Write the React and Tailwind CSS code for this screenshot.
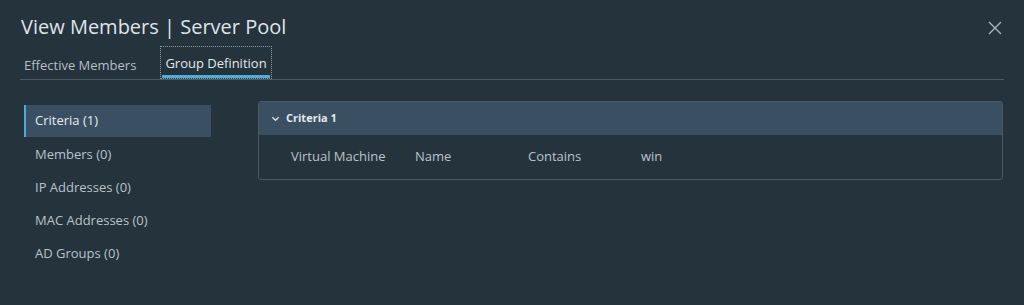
export default function App() {
  const items = ["Criteria (1)", "Members (0)", "IP Addresses (0)", "MAC Addresses (0)", "AD Groups (0)"];
  return (
    <div className="w-[1024px] h-[305px] bg-[#25333d] text-[#c9d3d9] overflow-hidden" style={{ fontFamily: "'Open Sans', 'Noto Sans', sans-serif" }}>
      <div className="flex items-start justify-between pl-[21px] pr-[22px] pt-[13px]">
        <h1 className="text-[20px] leading-[28px] text-[#dfe5e8] font-normal">View Members | Server Pool</h1>
        <svg width="14" height="14" viewBox="0 0 14 14" className="mt-[8px]" fill="none" stroke="#a9b6be" strokeWidth="1.4">
          <path d="M1 1L13 13M13 1L1 13" />
        </svg>
      </div>
      <div className="mx-[20px] mt-[5px] flex border-b border-[#4a5a64] h-[34px]">
        <div className="px-[4px] pt-[6px] flex items-center text-[13px] text-[#b4bfc5] h-full">Effective Members</div>
        <div className="ml-[20px] relative flex flex-col h-full border border-dotted border-[#8c9aa3]">
          <div className="flex-1 flex items-center pt-[6px] px-[4px] text-[13px] text-[#e2e8eb]">Group Definition</div>
          <div className="mx-[1px] h-[3px] bg-[#49afd9]" />
        </div>
      </div>
      <div className="flex mt-[26px] pl-[24px] pr-[21px]">
        <div className="w-[187px] flex flex-col -mt-[1px]">
          {items.map((t, i) => (
            <div
              key={t}
              className={
                i === 0
                  ? "h-[32px] mb-[1px] flex items-center pl-[9px] border-l-2 border-[#49afd9] bg-[#3a5062] text-[13px] text-[#e6ecef]"
                  : "h-[33px] flex items-center pl-[11px] text-[13px] text-[#b8c3c9]"
              }
            >
              {t}
            </div>
          ))}
        </div>
        <div className="ml-[47px] -mt-[5px] flex-1 h-[79px] border border-[#4b5a63] rounded-[3px] overflow-hidden">
          <div className="h-[33px] bg-[#3a5062] flex items-center pl-[12px] gap-[6px]">
            <svg width="9" height="9" viewBox="0 0 10 10" fill="none" stroke="#d5dde1" strokeWidth="1.6">
              <path d="M1.5 3.5L5 7L8.5 3.5" />
            </svg>
            <span className="text-[11px] font-bold text-[#e3e9ec]">Criteria 1</span>
          </div>
          <div className="h-[44px] flex items-center pl-[32px] text-[13px] text-[#b8c3c9]">
            <span className="w-[124px]">Virtual Machine</span>
            <span className="w-[113px]">Name</span>
            <span className="w-[113px]">Contains</span>
            <span>win</span>
          </div>
        </div>
      </div>
    </div>
  );
}
